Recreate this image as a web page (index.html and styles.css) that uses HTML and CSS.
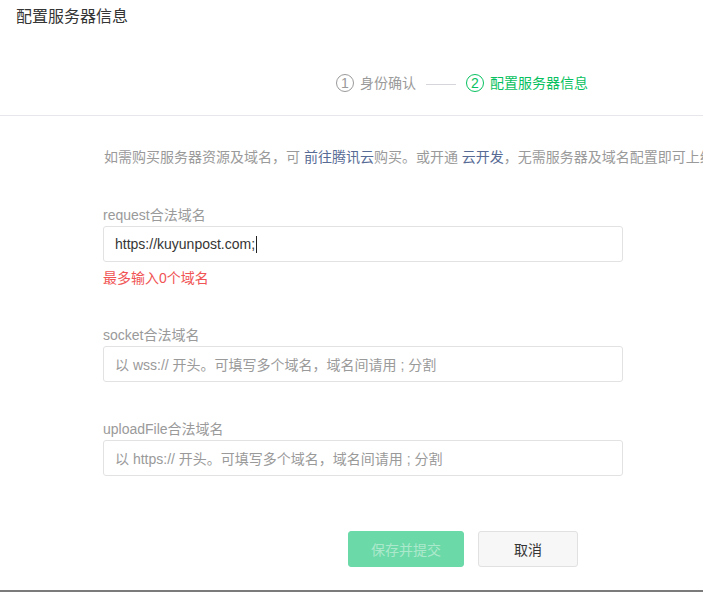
FILE: index.html
```
<!DOCTYPE html>
<html lang="zh-CN">
<head>
<meta charset="utf-8">
<title>配置服务器信息</title>
<link rel="stylesheet" href="styles.css">
</head>
<body>
<div class="page">
  <div class="header">
    <div class="title">配置服务器信息</div>
    <div class="steps">
      <div class="step">
        <span class="num">1</span>
        <span class="step-text">身份确认</span>
      </div>
      <span class="step-line"></span>
      <div class="step step-active">
        <span class="num">2</span>
        <span class="step-text">配置服务器信息</span>
      </div>
    </div>
  </div>
  <div class="content">
    <p class="desc">如需购买服务器资源及域名，可 <a class="link">前往腾讯云</a>购买。或开通 <a class="link">云开发</a>，无需服务器及域名配置即可上线小程序。</p>

    <div class="field">
      <div class="label">request合法域名</div>
      <div class="input"><span class="value">https://kuyunpost.com;</span><span class="caret"></span></div>
      <div class="error">最多输入0个域名</div>
    </div>

    <div class="field">
      <div class="label">socket合法域名</div>
      <div class="input"><span class="placeholder">以 wss:// 开头。可填写多个域名，域名间请用 ; 分割</span></div>
    </div>

    <div class="field">
      <div class="label">uploadFile合法域名</div>
      <div class="input"><span class="placeholder">以 https:// 开头。可填写多个域名，域名间请用 ; 分割</span></div>
    </div>

    <div class="actions">
      <button class="btn btn-primary" disabled>保存并提交</button>
      <button class="btn btn-default">取消</button>
    </div>
  </div>
</div>
</body>
</html>
```
FILE: styles.css
```
html, body {
  margin: 0;
  padding: 0;
  background: #fff;
}
body {
  font-family: "Liberation Sans", "Noto Sans CJK SC", sans-serif;
  font-size: 14px;
  color: #353535;
}
.page {
  width: 703px;
  height: 592px;
  box-sizing: border-box;
  border-bottom: 2px solid #7b7b7b;
  overflow: hidden;
}
.header {
  padding: 5px 0 0 16px;
  border-bottom: 1px solid #e7e7eb;
}
.title {
  font-size: 16px;
  line-height: 24px;
  color: #353535;
}
.steps {
  display: flex;
  align-items: center;
  margin-top: 43px;
  margin-left: 320px;
  height: 22px;
  padding-bottom: 21px;
}
.step {
  display: flex;
  align-items: center;
  color: #9a9a9a;
}
.num {
  width: 18px;
  height: 18px;
  box-sizing: border-box;
  border: 1px solid #9a9a9a;
  border-radius: 50%;
  display: flex;
  align-items: center;
  justify-content: center;
  font-size: 14px;
  line-height: 16px;
  margin-right: 6px;
}
.step-text {
  font-size: 14px;
  line-height: 22px;
}
.step-line {
  width: 30px;
  height: 1px;
  background: #d5d6d9;
  margin: 2px 10px 0 10px;
}
.step-active {
  color: #07c160;
}
.step-active .num {
  border-color: #07c160;
}
.content {
  padding: 30px 0 0 103px;
}
.desc {
  margin: 0 0 37px 1px;
  line-height: 22px;
  color: #9a9a9a;
  white-space: nowrap;
}
.link {
  color: #576b95;
  text-decoration: none;
}
.field {
  width: 520px;
  margin-bottom: 37px;
}
.label {
  line-height: 20px;
  color: #9a9a9a;
  margin-bottom: 1px;
}
.input {
  height: 36px;
  box-sizing: border-box;
  border: 1px solid #e2e2e2;
  border-radius: 3px;
  padding: 0 11px;
  display: flex;
  align-items: center;
  font-size: 14px;
}
.value {
  color: #353535;
}
.caret {
  width: 1px;
  height: 17px;
  background: #222;
  margin-left: 1px;
}
.placeholder {
  color: #9a9a9a;
}
.error {
  margin-top: 6px;
  line-height: 20px;
  color: #f05454;
}
.actions {
  display: flex;
  gap: 14px;
  margin-top: 55px;
  margin-left: 245px;
}
.btn {
  height: 36px;
  box-sizing: border-box;
  border-radius: 3px;
  font-family: "Liberation Sans", "Noto Sans CJK SC", sans-serif;
  font-size: 14px;
  padding: 0;
}
.btn-primary {
  width: 116px;
  background: #6cd9a8;
  border: 1px solid #6cd9a8;
  color: #ace9cc;
}
.btn-default {
  width: 100px;
  background: #f7f7f7;
  border: 1px solid #e1e1e1;
  color: #353535;
}
```
